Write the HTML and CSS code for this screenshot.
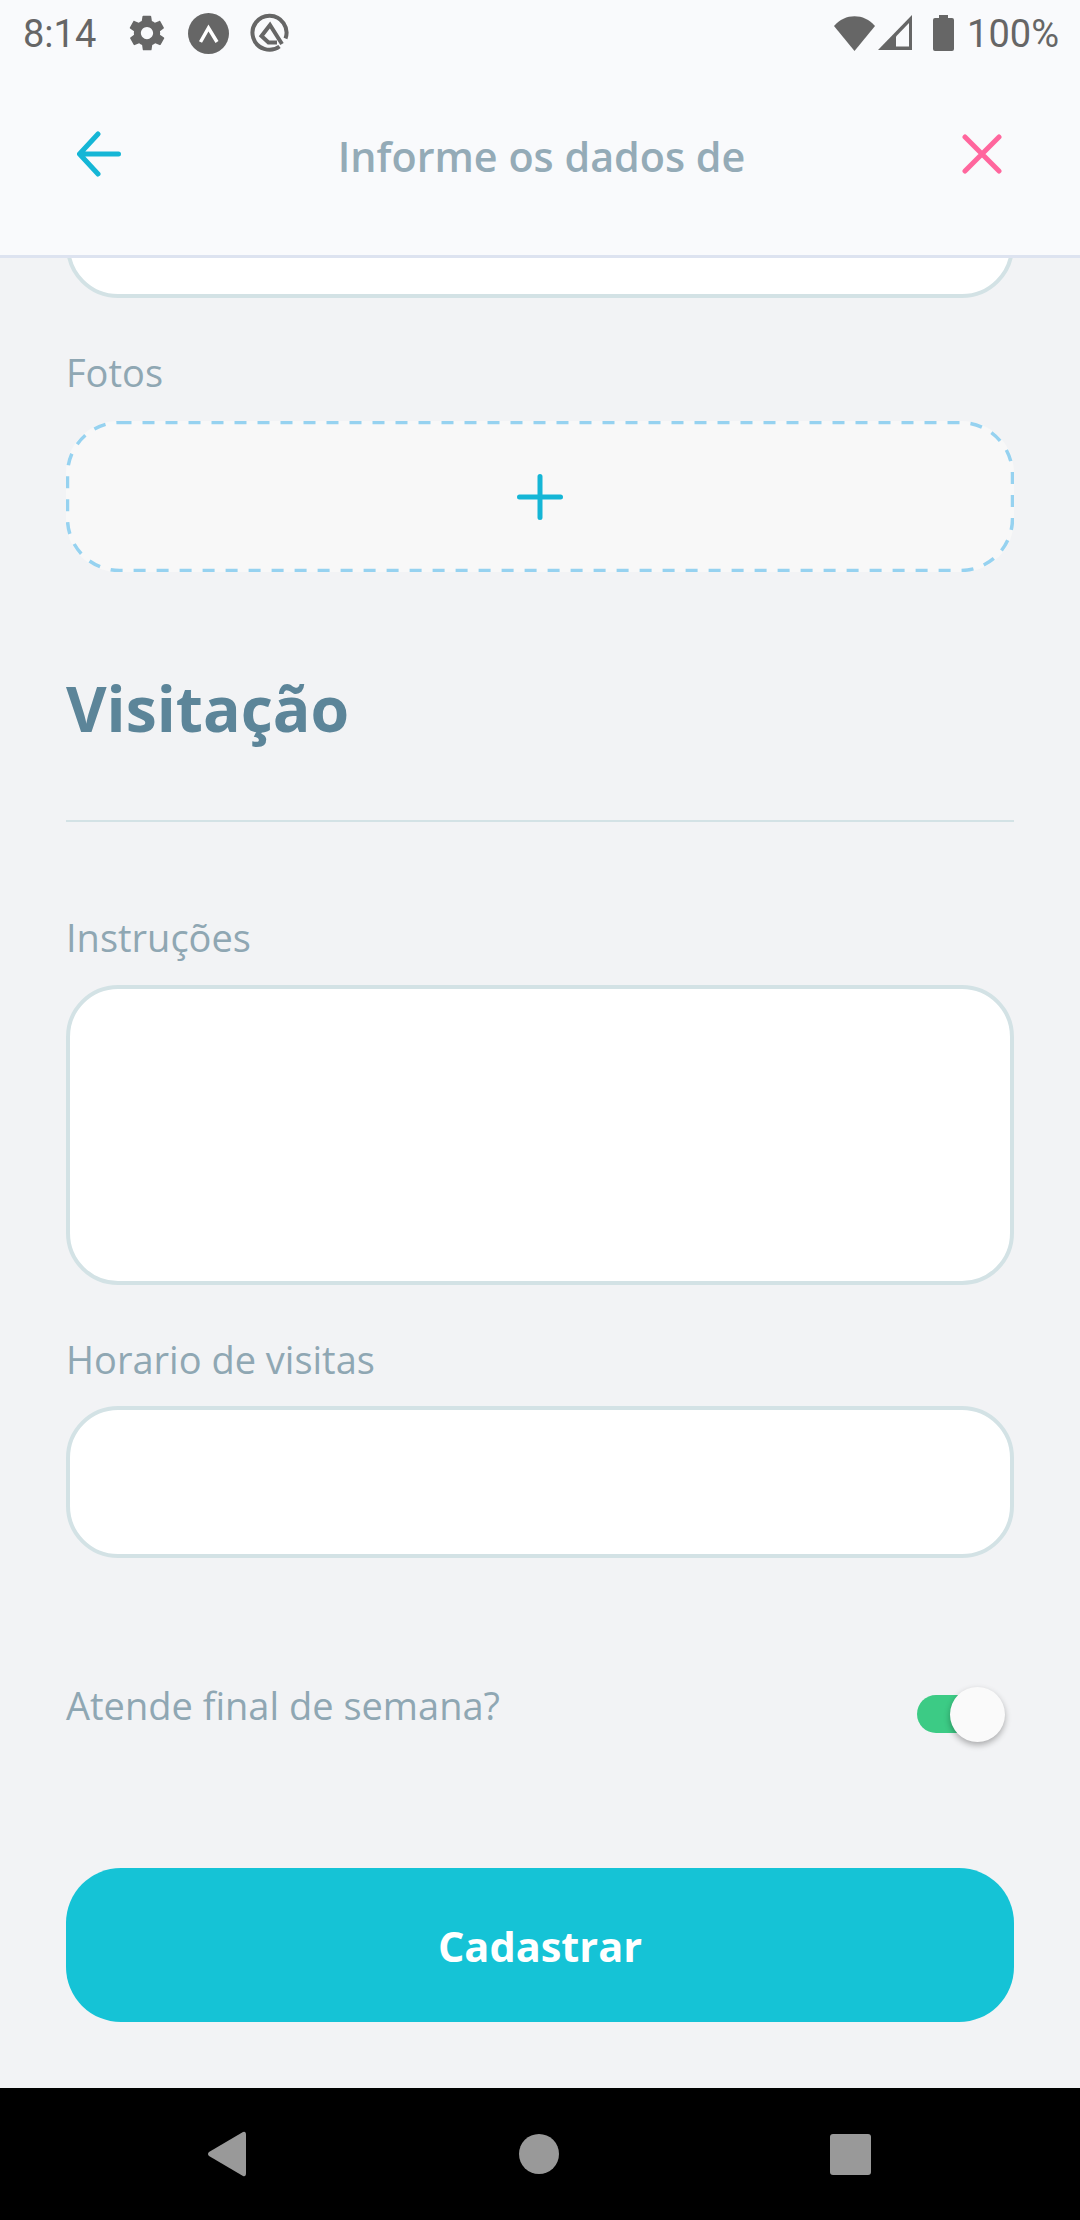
FILE: index.html
```html
<!DOCTYPE html>
<html lang="pt-BR">
<head>
  <meta charset="UTF-8" />
  <meta name="viewport" content="width=device-width, initial-scale=1.0" />
  <title>Informe os dados de</title>
  <link rel="stylesheet" href="styles.css">
</head>
<body>

  <header class="top">
    <div class="status">
      <span class="status-time">8:14</span>
      <svg class="ic-gear" width="42" height="42" viewBox="0 0 24 24"><path fill="#666" d="M19.4 13c.1-.3.1-.7.1-1s0-.7-.1-1l2.100-1.600c.2-.2.2-.4.1-.6l-2-3.500c-.1-.2-.4-.3-.6-.2l-2.500 1c-.5-.4-1.100-.7-1.700-1l-.4-2.600c0-.2-.2-.4-.5-.4h-4c-.3 0-.5.2-.5.400l-.4 2.600c-.6.3-1.200.6-1.700 1l-2.500-1c-.2-.1-.5 0-.6.200l-2 3.500c-.1.200-.1.400.1.600L4.600 11c-.1.300-.1.700-.1 1s0 .7.1 1l-2.100 1.600c-.2.200-.2.400-.1.600l2 3.500c.1.200.4.300.6.200l2.500-1c.5.400 1.100.700 1.700 1l.4 2.600c0 .2.2.4.5.4h4c.3 0 .5-.2.5-.4l.4-2.600c.6-.3 1.200-.6 1.700-1l2.500 1c.2.100.5 0 .6-.2l2-3.500c.1-.2.1-.4-.1-.6L19.400 13zM12 15.500c-1.900 0-3.500-1.600-3.500-3.500s1.600-3.500 3.500-3.500 3.500 1.600 3.500 3.500-1.600 3.500-3.500 3.500z"/></svg>
      <svg class="ic-round" width="41" height="41" viewBox="0 0 41 41"><circle cx="20.500" cy="20.500" r="20.500" fill="#666"/><path d="M12.500 29 L20.500 15 L29 29" fill="none" stroke="#fff" stroke-width="3.500"/></svg>
      <svg class="ic-q" width="40" height="40" viewBox="0 0 40 40"><path d="M29.500 33.500 A17 17 0 1 1 35.500 25.500" fill="none" stroke="#666" stroke-width="4"/><path d="M32 31 L20 12 L11.500 23 L18.500 29.500 H27" fill="none" stroke="#666" stroke-width="4"/></svg>
      <span class="status-gap"></span>
      <svg class="ic-wifi" width="41" height="35" viewBox="0 0 41 35"><path fill="#666" d="M0 10 C11 -3 30 -3 41 10 L20.500 35 Z"/></svg>
      <svg class="ic-signal" width="35" height="36" viewBox="0 0 35 36"><path fill="#666" d="M0 35 L34 0 V35 Z"/><path fill="#f9fafc" d="M18 31.500 H31 V8 L18 21.500 Z"/></svg>
      <svg class="ic-batt" width="21" height="36" viewBox="0 0 21 36"><path fill="#666" d="M6 0 H15 V3 H19 Q21 3 21 5 V34 Q21 36 19 36 H2 Q0 36 0 34 V5 Q0 3 2 3 H6 Z"/></svg>
      <span class="status-batt">100%</span>
    </div>
    <div class="titlebar">
      <svg class="ic-back" width="44" height="46" viewBox="0 0 44 46"><path d="M21 3 L2.500 23 L21 43 M3 23 H41.500" fill="none" stroke="#15b6d6" stroke-width="5" stroke-linecap="round" stroke-linejoin="round"/></svg>
      <h1>Informe os dados de</h1>
      <svg class="ic-close" width="40" height="40" viewBox="0 0 40 40"><path d="M3 3 L37 37 M37 3 L3 37" fill="none" stroke="#ff669d" stroke-width="5" stroke-linecap="round"/></svg>
    </div>
  </header>

  <main>
    <div class="field field-cut"></div>

    <label class="lbl lbl-fotos">Fotos</label>
    <div class="upload">
      <svg class="upload-dash" width="948" height="151" viewBox="0 0 948 151"><rect x="1.500" y="1.500" width="945" height="148" rx="52" fill="none" stroke="#96d2f0" stroke-width="3.500" stroke-dasharray="12 11"/></svg>
      <svg width="46" height="46" viewBox="0 0 46 46"><path d="M23 2.500 V43.500 M2.500 23 H43.500" fill="none" stroke="#15b6d6" stroke-width="5" stroke-linecap="round"/></svg>
    </div>

    <h2>Visitação</h2>
    <hr class="divider" />

    <label class="lbl lbl-instr">Instruções</label>
    <div class="field field-big"></div>

    <label class="lbl lbl-hora">Horario de visitas</label>
    <div class="field"></div>

    <div class="weekend">
      <span class="lbl">Atende final de semana?</span>
      <div class="switch"><span class="switch-thumb"></span></div>
    </div>

    <button class="submit">Cadastrar</button>
  </main>

  <footer class="navbar">
    <svg width="40" height="46" viewBox="0 0 40 46"><path fill="#999" d="M36 1 Q39 0 39 4 V42 Q39 46 36 45 L2 25 Q0 23 2 21 Z"/></svg>
    <span class="nav-home"></span>
    <span class="nav-recent"></span>
  </footer>

</body>
</html>
```

FILE: styles.css
```css
* {
  box-sizing: border-box;
}
html, body {
  height: 100%;
}
body {
  margin: 0;
  display: flex;
  flex-direction: column;
  height: 2220px;
  overflow: hidden;
  font-family: "Open Sans", sans-serif;
  background: #f2f3f5;
  color: #8fa7b3;
}
.top {
  flex: none;
  height: 258px;
  background: #f9fafc;
  border-bottom: 3px solid #dde3f0;
}
.status {
  display: flex;
  align-items: center;
  height: 66px;
  padding: 0 21px 0 23px;
  color: #666;
  font-family: Roboto, sans-serif;
  font-size: 38px;
}
.status-time,
.status-batt {
  padding-top: 2px;
}
.status-time {
  width: 103px;
}
.ic-round {
  margin-left: 20px;
}
.ic-q {
  margin-left: 21px;
}
.status-gap {
  flex: 1;
}
.ic-signal {
  margin-left: 3px;
}
.ic-batt {
  margin-left: 20px;
}
.status-batt {
  margin-left: 13px;
}
.titlebar {
  display: flex;
  align-items: center;
  justify-content: space-between;
  height: 176px;
  padding: 0 78px 0 77px;
}
.titlebar h1 {
  margin: 3px 0 0;
  font-size: 41.300px;
  font-weight: 600;
  color: #94abb7;
}
main {
  flex: 1;
  min-height: 0;
  overflow: hidden;
  padding: 0 66px;
}
.lbl {
  display: block;
  font-size: 38px;
  font-weight: 500;
  line-height: 40px;
  color: #8fa7b3;
}
.field {
  height: 152px;
  background: #fff;
  border: 4px solid #d3e2e5;
  border-radius: 52px;
}
.field-cut {
  margin-top: -112px;
}
.field-big {
  height: 300px;
}
.lbl-fotos {
  margin-top: 54px;
  margin-bottom: 29px;
}
.upload {
  position: relative;
  display: flex;
  align-items: center;
  justify-content: center;
  height: 151px;
  background: #f8f8f8;
  border-radius: 52px;
}
.upload-dash {
  position: absolute;
  top: 0;
  left: 0;
}
h2 {
  margin: 96px 0 0;
  font-size: 62.500px;
  line-height: 80px;
  font-weight: 700;
  color: #5c8599;
}
.divider {
  margin: 72px 0 0;
  height: 2px;
  border: 0;
  background: #d3e2e5;
}
.lbl-instr {
  margin-top: 95px;
  margin-bottom: 28px;
}
.lbl-hora {
  margin-top: 54px;
  margin-bottom: 27px;
}
.weekend {
  display: flex;
  align-items: center;
  justify-content: space-between;
  margin-top: 117px;
  height: 60px;
}
.switch {
  position: relative;
  margin: 18px 14px 0 0;
  width: 83px;
  height: 38px;
  border-radius: 19px;
  background: #3ccb85;
}
.switch-thumb {
  position: absolute;
  top: -8px;
  right: -5px;
  width: 55px;
  height: 55px;
  border-radius: 50%;
  background: #fafafa;
  box-shadow: 0 3px 6px rgba(0,0,0,0.3);
}
.submit {
  display: block;
  width: 100%;
  height: 154px;
  margin-top: 133px;
  padding-top: 2px;
  border: 0;
  border-radius: 55px;
  background: #15c3d6;
  color: #fff;
  font-family: inherit;
  font-size: 41.500px;
  font-weight: 700;
}
.navbar {
  flex: none;
  display: flex;
  align-items: center;
  height: 132px;
  background: #000;
  padding: 0 209px 0 207px;
  justify-content: space-between;
}
.nav-home {
  width: 40px;
  height: 40px;
  border-radius: 50%;
  background: #999;
}
.nav-recent {
  width: 41px;
  height: 41px;
  border-radius: 3px;
  background: #999;
}
```
